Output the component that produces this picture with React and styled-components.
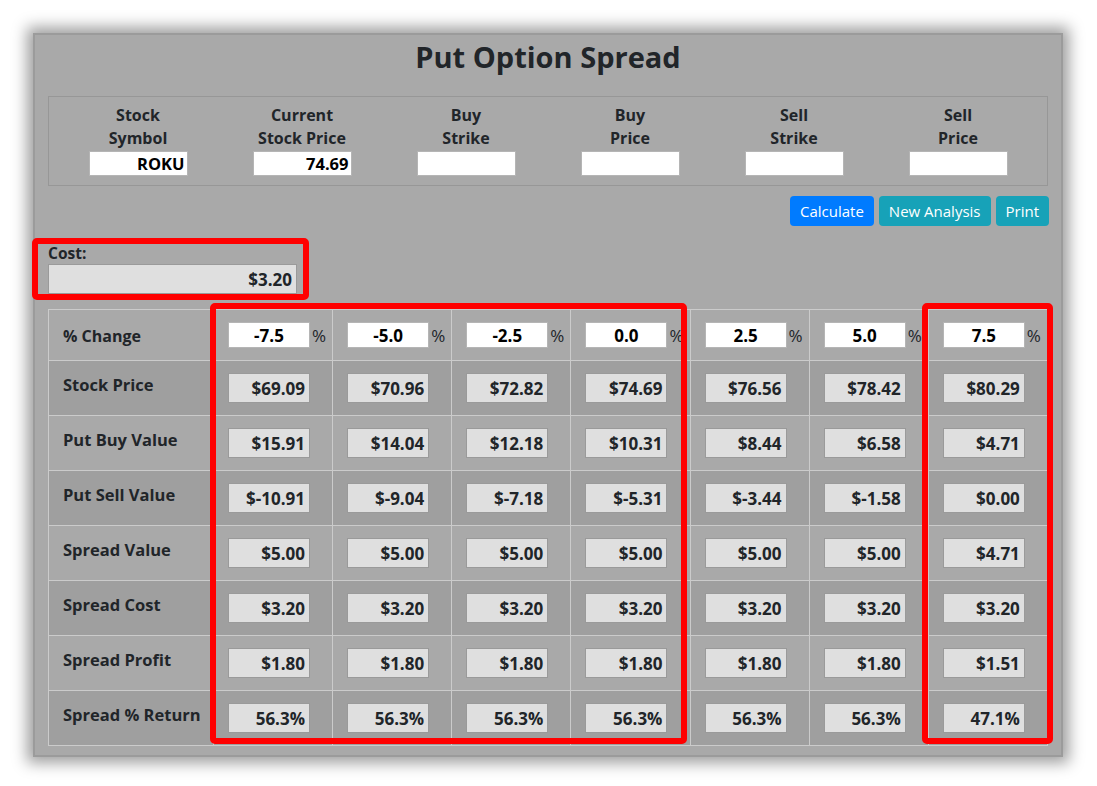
import React from 'react'
import styled, { createGlobalStyle } from 'styled-components'

const GlobalStyle = createGlobalStyle`
  body {
    margin: 0;
    background: #fff;
    font-family: "Open Sans", "Noto Sans", Arial, sans-serif;
    color: #212529;
  }
`

const inputs = [
  { top: 'Stock', bottom: 'Symbol', value: 'ROKU' },
  { top: 'Current', bottom: 'Stock Price', value: '74.69' },
  { top: 'Buy', bottom: 'Strike', value: '' },
  { top: 'Buy', bottom: 'Price', value: '' },
  { top: 'Sell', bottom: 'Strike', value: '' },
  { top: 'Sell', bottom: 'Price', value: '' },
]

const changes = ['-7.5', '-5.0', '-2.5', '0.0', '2.5', '5.0', '7.5']

const rows = [
  { label: 'Stock Price', values: ['$69.09', '$70.96', '$72.82', '$74.69', '$76.56', '$78.42', '$80.29'] },
  { label: 'Put Buy Value', values: ['$15.91', '$14.04', '$12.18', '$10.31', '$8.44', '$6.58', '$4.71'] },
  { label: 'Put Sell Value', values: ['$-10.91', '$-9.04', '$-7.18', '$-5.31', '$-3.44', '$-1.58', '$0.00'] },
  { label: 'Spread Value', values: ['$5.00', '$5.00', '$5.00', '$5.00', '$5.00', '$5.00', '$4.71'] },
  { label: 'Spread Cost', values: ['$3.20', '$3.20', '$3.20', '$3.20', '$3.20', '$3.20', '$3.20'] },
  { label: 'Spread Profit', values: ['$1.80', '$1.80', '$1.80', '$1.80', '$1.80', '$1.80', '$1.51'] },
  { label: 'Spread % Return', values: ['56.3%', '56.3%', '56.3%', '56.3%', '56.3%', '56.3%', '47.1%'] },
]

const App = () => {
  return (
    <Page>
      <GlobalStyle />
      <Panel>
        <Title>Put Option Spread</Title>

        <InputBox>
          {inputs.map((f, i) => (
            <Field key={i}>
              <FieldLabel>{f.top}</FieldLabel>
              <FieldLabel>{f.bottom}</FieldLabel>
              <TextInput readOnly value={f.value} />
            </Field>
          ))}
        </InputBox>

        <ButtonRow>
          <Button primary>Calculate</Button>
          <Button>New Analysis</Button>
          <Button>Print</Button>
        </ButtonRow>

        <CostBox>
          <CostLabel>Cost:</CostLabel>
          <CostValue>$3.20</CostValue>
        </CostBox>

        <TableWrap>
          <Table>
            <colgroup>
              <col style={{ width: 165 }} />
              {changes.map((c) => (
                <col key={c} />
              ))}
            </colgroup>
            <thead>
              <tr>
                <HeadLabel>% Change</HeadLabel>
                {changes.map((c) => (
                  <HeadCell key={c}>
                    <PctInput readOnly value={c} />
                    <Pct>%</Pct>
                  </HeadCell>
                ))}
              </tr>
            </thead>
            <tbody>
              {rows.map((r, i) => (
                <Row key={r.label} striped={i % 2 === 0}>
                  <RowLabel>{r.label}</RowLabel>
                  {r.values.map((v, j) => (
                    <Cell key={j}>
                      <ValueBox>{v}</ValueBox>
                    </Cell>
                  ))}
                </Row>
              ))}
            </tbody>
          </Table>
          <Marker left={162} width={477} />
          <Marker left={874} width={131} />
        </TableWrap>
      </Panel>
    </Page>
  )
}

export default App

// PAGE
const Page = styled.div`
  padding: 33px;
`

const Panel = styled.div`
  width: 1030px;
  height: 724px;
  box-sizing: border-box;
  padding: 4px 13px 14px;
  background: #a9a9a9;
  border: 2px solid #9b9b9b;
  box-shadow: 0 0 14px 6px rgba(0, 0, 0, 0.38);
  display: flex;
  flex-direction: column;
`

const Title = styled.h2`
  margin: 0;
  text-align: center;
  font-size: 29px;
  line-height: 35px;
  font-weight: 700;
  color: #212529;
`

// INPUTS
const InputBox = styled.div`
  margin-top: 22px;
  border: 1px solid #979797;
  padding: 7px 7px 9px;
  display: grid;
  grid-template-columns: repeat(6, 1fr);
`

const Field = styled.div`
  display: flex;
  flex-direction: column;
  align-items: center;
`

const FieldLabel = styled.div`
  font-size: 16px;
  line-height: 23px;
  font-weight: 700;
`

const TextInput = styled.input`
  margin-top: 1px;
  width: 99px;
  height: 25px;
  box-sizing: border-box;
  border: 1px solid #b5b5b5;
  background: #fff;
  padding: 0 2px;
  text-align: right;
  font-family: inherit;
  font-size: 16.5px;
  font-weight: 700;
  color: #000;
  outline: none;
`

// BUTTONS
const ButtonRow = styled.div`
  margin-top: 10px;
  margin-right: -1px;
  display: flex;
  justify-content: flex-end;
  gap: 5px;
`

const Button = styled.button`
  height: 30px;
  padding: 0 10px;
  border: none;
  border-radius: 4px;
  background: ${(p) => (p.primary ? '#007bff' : '#17a2b8')};
  color: #fff;
  font-family: inherit;
  font-size: 15px;
  cursor: pointer;
`

// COST
const CostBox = styled.div`
  margin: 12px 0 0 -16px;
  align-self: flex-start;
  border: 6px solid #f00;
  border-radius: 5px;
  padding: 0 6px 0 10px;
`

const CostLabel = styled.div`
  font-size: 15.5px;
  line-height: 18px;
  font-weight: 700;
`

const CostValue = styled.div`
  margin-top: 2px;
  width: 249px;
  height: 30px;
  box-sizing: border-box;
  border: 1px solid #9a9a9a;
  background: #dfdfdf;
  padding: 0 4px;
  display: flex;
  align-items: center;
  justify-content: flex-end;
  font-size: 17px;
  font-weight: 700;
`

// TABLE
const TableWrap = styled.div`
  position: relative;
  margin-top: 9px;
`

const Table = styled.table`
  width: 100%;
  table-layout: fixed;
  border-collapse: collapse;
`

const HeadLabel = styled.th`
  border: 1px solid #cbcbcb;
  padding: 12px 14px;
  text-align: left;
  vertical-align: bottom;
  font-size: 16px;
  line-height: 24px;
  font-weight: 700;
`

const HeadCell = styled.th`
  border: 1px solid #cbcbcb;
  padding: 12px 0 12px 14px;
  text-align: left;
  white-space: nowrap;
`

const PctInput = styled.input`
  width: 82px;
  height: 26px;
  box-sizing: border-box;
  border: 1px solid #b5b5b5;
  background: #fff;
  text-align: center;
  font-family: inherit;
  font-size: 17px;
  font-weight: 700;
  color: #000;
  vertical-align: middle;
  outline: none;
`

const Pct = styled.span`
  margin-left: 2px;
  font-size: 17px;
  font-weight: 400;
  vertical-align: middle;
`

const Row = styled.tr`
  background: ${(p) => (p.striped ? 'rgba(0, 0, 0, 0.055)' : 'transparent')};
`

const RowLabel = styled.th`
  border: 1px solid #cbcbcb;
  padding: 12px 14px;
  text-align: left;
  vertical-align: top;
  font-size: 16.5px;
  line-height: 24px;
  font-weight: 700;
  white-space: nowrap;
`

const Cell = styled.td`
  border: 1px solid #cbcbcb;
  padding: 12px 0 12px 14px;
`

const ValueBox = styled.div`
  width: 82px;
  height: 30px;
  box-sizing: border-box;
  border: 1px solid #9a9a9a;
  background: #dfdfdf;
  padding: 0 4px;
  display: flex;
  align-items: center;
  justify-content: flex-end;
  font-size: 17px;
  font-weight: 700;
`

// ANNOTATION
const Marker = styled.div`
  position: absolute;
  top: -6px;
  left: ${(p) => p.left}px;
  width: ${(p) => p.width}px;
  height: 441px;
  box-sizing: border-box;
  border: 6px solid #f00;
  border-radius: 5px;
  pointer-events: none;
`
